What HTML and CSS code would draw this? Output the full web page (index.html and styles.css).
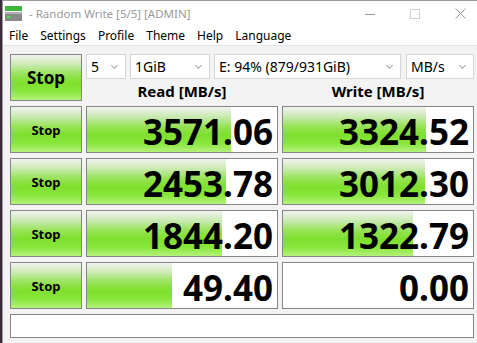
FILE: index.html
```html
<!DOCTYPE html>
<html>
<head>
<meta charset="utf-8">
<link rel="stylesheet" href="styles.css">
</head>
<body>
<div class="window">
  <div class="titlebar">
    <svg class="appicon" width="17" height="16" viewBox="0 0 17 16">
      <rect x="0" y="0" width="17" height="5" fill="#3cb43c"/>
      <rect x="0" y="6" width="17" height="9" fill="#8a8a8a"/>
      <rect x="0" y="6" width="17" height="2" fill="#b0b0b0"/>
      <rect x="2" y="10" width="4" height="2" fill="#5ad25a"/>
    </svg>
    <span class="title">- Random Write [5/5] [ADMIN]</span>
    <div class="controls">
      <svg width="10" height="10" viewBox="0 0 10 10"><line x1="0" y1="5.5" x2="10" y2="5.5" stroke="#9a9a9a"/></svg>
      <svg width="10" height="10" viewBox="0 0 10 10"><rect x="0.5" y="0.5" width="9" height="9" fill="none" stroke="#cfcfcf"/></svg>
      <svg width="11" height="11" viewBox="0 0 11 11"><path d="M0.5 0.5 L10.5 10.5 M10.5 0.5 L0.5 10.5" stroke="#9a9a9a" fill="none"/></svg>
    </div>
  </div>
  <div class="menubar">
    <span>File</span><span>Settings</span><span>Profile</span><span>Theme</span><span>Help</span><span>Language</span>
  </div>
  <div class="client">
    <div class="grid">
      <div class="btn btn-main">Stop</div>
      <div class="topright">
        <div class="combos">
          <div class="combo c-count">5<i class="chev"></i></div>
          <div class="combo c-size">1GiB<i class="chev"></i></div>
          <div class="combo c-drive">E: 94% (879/931GiB)<i class="chev"></i></div>
          <div class="combo c-unit">MB/s<i class="chev"></i></div>
        </div>
        <div class="headers">
          <div class="hdr">Read [MB/s]</div>
          <div class="hdr">Write [MB/s]</div>
        </div>
      </div>

      <div class="btn">Stop</div>
      <div class="cell"><div class="bar" style="width:144px"></div><span class="val">3571.06</span></div>
      <div class="cell"><div class="bar" style="width:143px"></div><span class="val">3324.52</span></div>

      <div class="btn">Stop</div>
      <div class="cell"><div class="bar" style="width:139px"></div><span class="val">2453.78</span></div>
      <div class="cell"><div class="bar" style="width:142px"></div><span class="val">3012.30</span></div>

      <div class="btn">Stop</div>
      <div class="cell"><div class="bar" style="width:135px"></div><span class="val">1844.20</span></div>
      <div class="cell"><div class="bar" style="width:130px"></div><span class="val">1322.79</span></div>

      <div class="btn">Stop</div>
      <div class="cell"><div class="bar" style="width:85px"></div><span class="val">49.40</span></div>
      <div class="cell"><span class="val">0.00</span></div>
    </div>
    <div class="status"></div>
  </div>
</div>
</body>
</html>
```

FILE: styles.css
```css
* { box-sizing: border-box; }
html, body { margin: 0; padding: 0; }
body {
  width: 477px;
  height: 343px;
  overflow: hidden;
  background: #3a2a3a;
  font-family: "Noto Sans", "Open Sans", sans-serif;
}
.window {
  margin-left: 2px;
  width: 475px;
  height: 343px;
  background: #f3f3f3;
  border-top: 1px solid #9a9a9a;
  border-left: 1px solid #9a9a9a;
}
.titlebar {
  height: 25px;
  background: #ffffff;
  display: flex;
  align-items: center;
  padding-left: 2px;
}
.appicon { margin-top: 1px; }
.title {
  margin-left: 7px;
  font-size: 11.5px;
  color: #9a9a9a;
}
.controls {
  margin-left: auto;
  display: flex;
  align-items: center;
  gap: 35px;
  padding-right: 11px;
}
.menubar {
  height: 20px;
  background: #ffffff;
  display: flex;
  align-items: center;
  padding-left: 6px;
  gap: 12px;
  font-size: 12px;
  color: #000;
  border-bottom: 1px solid #e3e3e3;
}
.client {
  padding: 8px 0 0 7px;
}
.grid {
  display: grid;
  grid-template-columns: 72px 192px 192px;
  grid-template-rows: 47px 47px 47px 47px 47px;
  column-gap: 4px;
  row-gap: 5px;
}
.btn {
  border: 1px solid #858585;
  background: linear-gradient(to bottom, #f2f2f2 0%, #c8eab0 22%, #94e250 45%, #7fe02e 62%, #88e63a 80%, #b4f27c 100%);
  display: flex;
  align-items: center;
  justify-content: center;
  font-weight: bold;
  font-size: 13px;
  color: #000;
}
.btn-main { font-size: 17px; }
.topright {
  grid-column: 2 / 4;
  display: flex;
  flex-direction: column;
}
.combos {
  display: flex;
  height: 25px;
  gap: 4px;
}
.combo {
  position: relative;
  background: #fff;
  border: 1px solid #d6d6d6;
  font-size: 14px;
  line-height: 23px;
  padding-left: 4px;
  color: #000;
}
.c-count { width: 40px; }
.c-size { width: 80px; }
.c-drive { width: 187px; margin-right: 1px; }
.c-unit { width: 68px; }
.chev {
  position: absolute;
  right: 8px;
  top: 8px;
  width: 5px;
  height: 5px;
  border-right: 1px solid #a8a8a8;
  border-bottom: 1px solid #a8a8a8;
  transform: rotate(45deg);
}
.headers {
  flex: 1;
  display: grid;
  grid-template-columns: 192px 192px;
  column-gap: 4px;
  align-items: center;
}
.hdr {
  text-align: center;
  font-weight: bold;
  font-size: 15px;
  padding-top: 1px;
}
.cell {
  position: relative;
  background: #fff;
  border: 1px solid #858585;
  display: flex;
  align-items: center;
  justify-content: flex-end;
  padding-right: 4px;
}
.bar {
  position: absolute;
  left: 0;
  top: 0;
  bottom: 0;
  background: linear-gradient(to bottom, #f2f2f2 0%, #c8eab0 22%, #94e250 45%, #7fe02e 62%, #88e63a 80%, #b4f27c 100%);
}
.val {
  position: relative;
  font-weight: bold;
  font-size: 35px;
  line-height: 40px;
  padding-top: 4px;
  color: #000;
}
.status {
  margin-top: 5px;
  width: 464px;
  height: 24px;
  background: #fff;
  border: 1px solid #858585;
}
```
